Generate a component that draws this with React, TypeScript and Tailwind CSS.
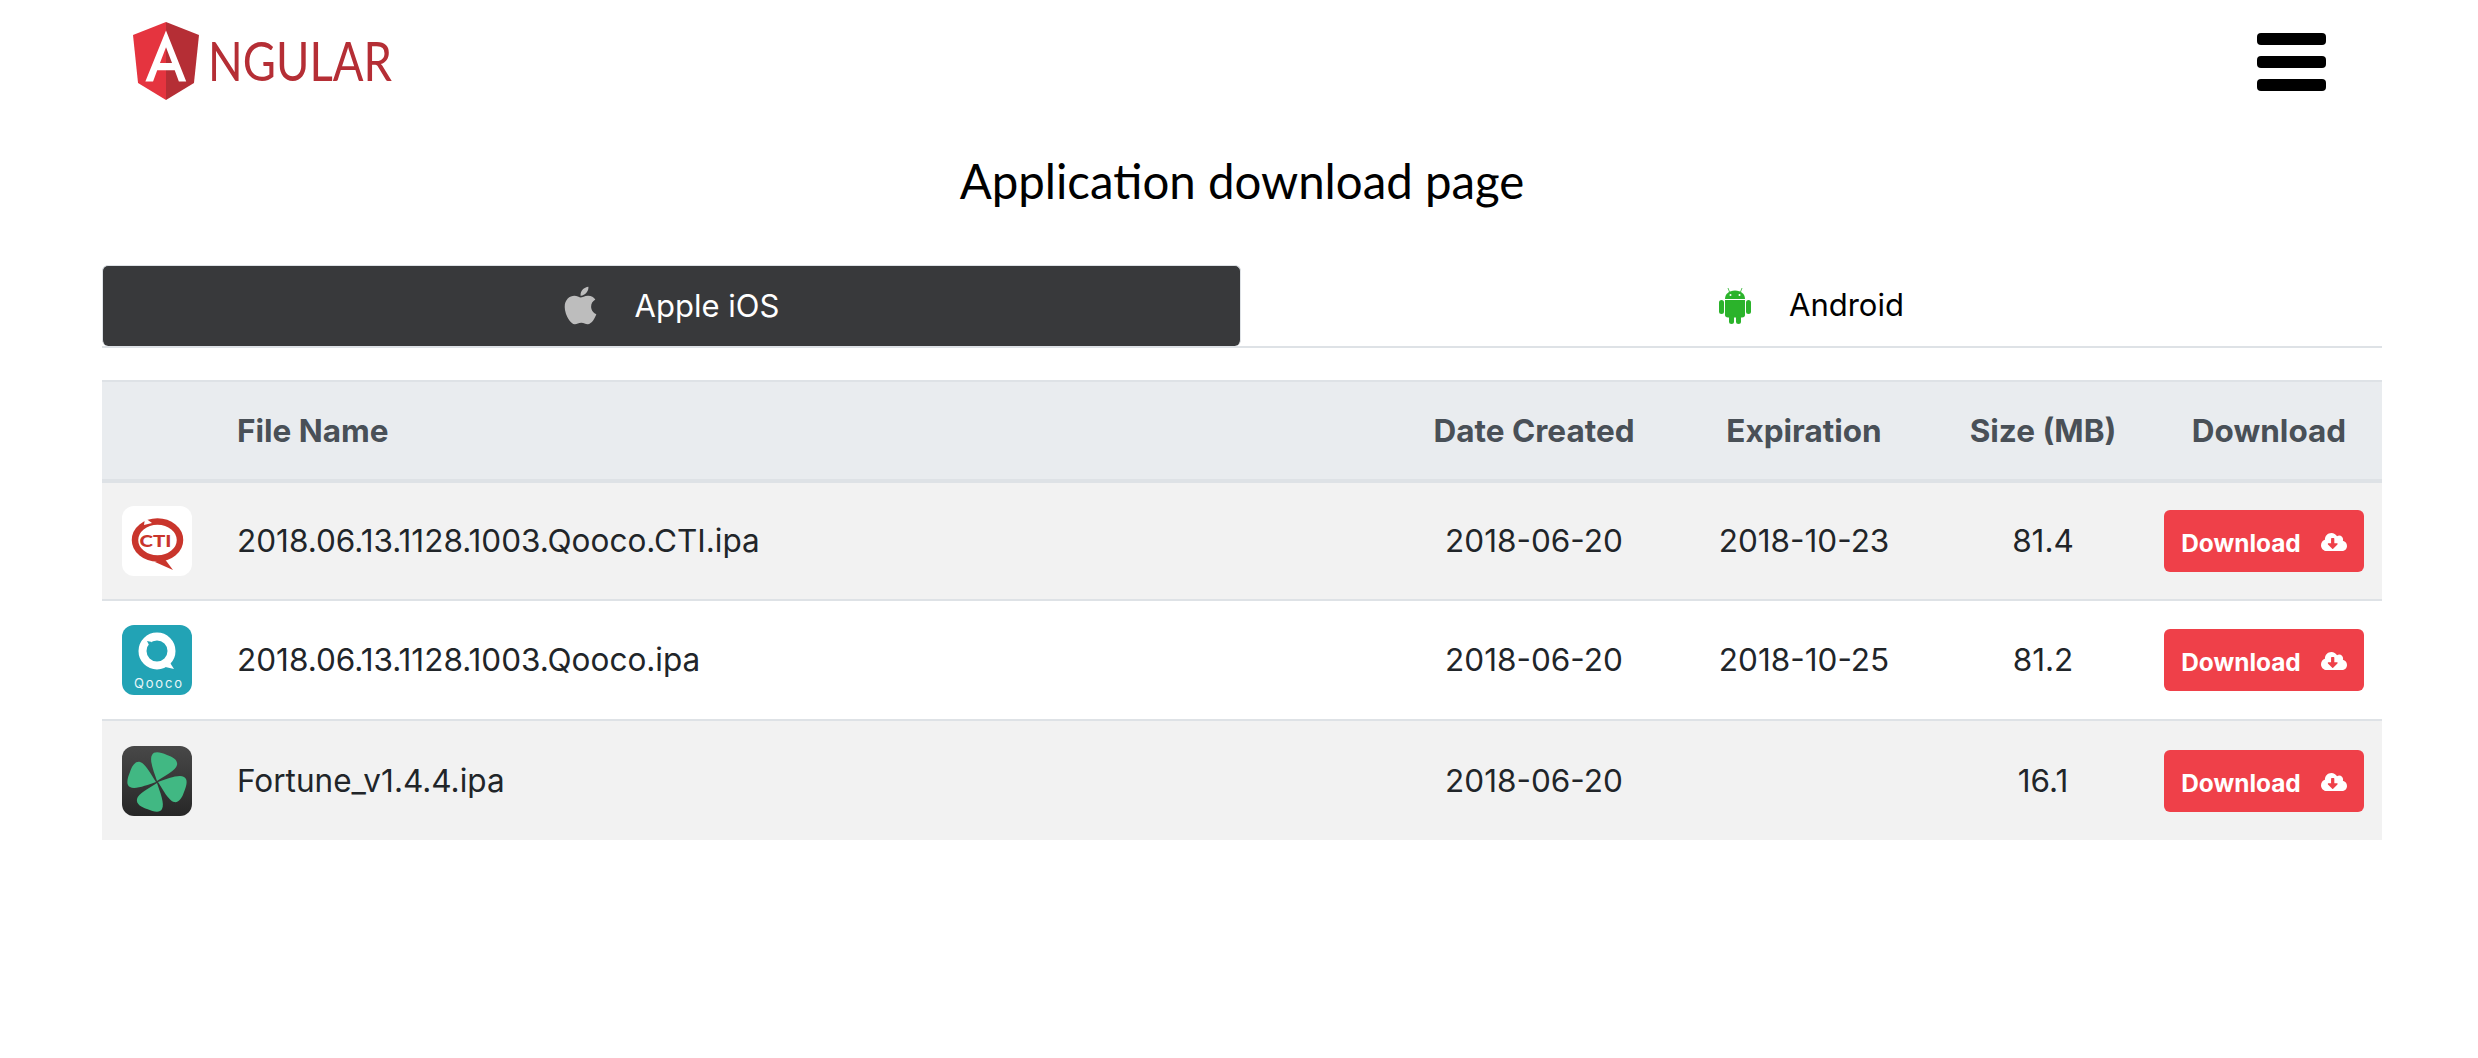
import { FaApple, FaCloudDownloadAlt } from "react-icons/fa";

const sans = "font-['Inter','Liberation_Sans',sans-serif]";

function Logo() {
  return (
    <svg width="270" height="78" viewBox="0 0 270 78" className="block overflow-visible">
      <g transform="translate(0 0) scale(0.3545 0.39) translate(-31.9 -30)">
        <polygon points="125,30 31.9,63.2 46.1,186.3 125,230" fill="#e5343f" />
        <polygon points="125,30 218.1,63.2 203.9,186.3 125,230" fill="#b52e35" />
        <path
          fill="#fff"
          fillRule="evenodd"
          d="M125,52.1L66.8,182.6h21.7l11.7-29.2h49.4l11.7,29.2H182L125,52.1z M142,135.4H108l17-40.9L142,135.4z"
        />
      </g>
      <text
        x="75"
        y="59"
        fontFamily="Lato, sans-serif"
        fontSize="54"
        fill="#b52e35"
        textLength="184"
        lengthAdjust="spacingAndGlyphs"
      >
        NGULAR
      </text>
    </svg>
  );
}

function AndroidIcon() {
  return (
    <svg width="32" height="37" viewBox="0 0 32 37" className="block">
      <g fill="#2bb32b">
        <rect x="0" y="13" width="5" height="14" rx="2.5" />
        <rect x="27" y="13" width="5" height="14" rx="2.5" />
        <path d="M6 12 C6 7 10 3.500 16 3.500 C22 3.500 26 7 26 12 Z" />
        <path d="M6 13 H26 V28 C26 29.500 25 30.500 23 30.500 H9 C7 30.500 6 29.500 6 28 Z" />
        <rect x="10" y="28" width="5" height="9" rx="2.500" />
        <rect x="17" y="28" width="5" height="9" rx="2.500" />
      </g>
      <path d="M10.500 5 L9 1 M21.500 5 L23 1" stroke="#2bb32b" strokeWidth="0.8" />
      <circle cx="11.500" cy="8" r="1" fill="#fff" />
      <circle cx="20.500" cy="8" r="1" fill="#fff" />
    </svg>
  );
}

function CtiIcon() {
  return (
    <svg width="70" height="70" viewBox="0 0 70 70" className="block">
      <rect width="70" height="70" rx="12" fill="#fff" />
      <path d="M42 52 L51 64 L33 56 Z" fill="#c9352c" />
      <ellipse cx="35.500" cy="34" rx="22.500" ry="18.500" fill="none" stroke="#c9352c" strokeWidth="6.500" />
      <path d="M22 19 L23 12 L30 17 Z" fill="#fff" />
      <text
        x="33.500"
        y="41"
        textAnchor="middle"
        fontFamily="Lato, sans-serif"
        fontWeight="900"
        fontSize="16"
        textLength="32"
        lengthAdjust="spacingAndGlyphs"
        fill="#c9352c"
      >
        CTI
      </text>
    </svg>
  );
}

function QoocoIcon() {
  return (
    <svg width="70" height="70" viewBox="0 0 70 70" className="block">
      <rect width="70" height="70" rx="12" fill="#22a3b5" />
      <circle cx="35" cy="26" r="14.500" fill="none" stroke="#fff" strokeWidth="8" />
      <path d="M45 33 L52 44 L39 41 Z" fill="#fff" />
      <path d="M25 16 L27 20 L30 17 Z" fill="#22a3b5" />
      <text
        x="36"
        y="63"
        textAnchor="middle"
        fontFamily="Inter, sans-serif"
        fontSize="13"
        textLength="48"
        fill="#e8f6f8"
      >
        Qooco
      </text>
    </svg>
  );
}

function FortuneIcon() {
  const petal = "M0 -1 C-3 -10 -8 -22 -5 -27 C-3 -31 3 -30 10 -27 C16 -25 21 -22 20 -17 C19 -12 8 -6 0 -1 Z";
  return (
    <svg width="70" height="70" viewBox="0 0 70 70" className="block">
      <defs>
        <linearGradient id="fortune" x1="0" y1="0" x2="0" y2="1">
          <stop offset="0" stopColor="#484848" />
          <stop offset="1" stopColor="#272727" />
        </linearGradient>
      </defs>
      <rect width="70" height="70" rx="12" fill="url(#fortune)" />
      <g transform="translate(35 36)" fill="#41b883">
        <path d={petal} />
        <path d={petal} transform="rotate(90)" />
        <path d={petal} transform="rotate(180)" />
        <path d={petal} transform="rotate(270)" />
      </g>
    </svg>
  );
}

const rows = [
  { icon: <CtiIcon />, name: "2018.06.13.1128.1003.Qooco.CTI.ipa", created: "2018-06-20", exp: "2018-10-23", size: "81.4", tr: "h-[119px] bg-[#f2f2f2]" },
  { icon: <QoocoIcon />, name: "2018.06.13.1128.1003.Qooco.ipa", created: "2018-06-20", exp: "2018-10-25", size: "81.2", tr: "h-[120px] bg-white border-t-2 border-[#dee2e6]" },
  { icon: <FortuneIcon />, name: "Fortune_v1.4.4.ipa", created: "2018-06-20", exp: "", size: "16.1", tr: "h-[120px] bg-[#f2f2f2] border-t-2 border-[#dee2e6]" },
];

export default function App() {
  return (
    <div className={`${sans} min-h-[1058px] bg-white pl-[102px] pr-[96px] text-[#212529]`}>
      <header className="flex items-start justify-between pt-[22px] pl-[31px] pr-[56px]">
        <Logo />
        <div className="mt-[11px] flex w-[69px] flex-col gap-[11px]">
          <div className="h-[12px] rounded-[4px] bg-black" />
          <div className="h-[12px] rounded-[4px] bg-black" />
          <div className="h-[12px] rounded-[4px] bg-black" />
        </div>
      </header>

      <h1 className="mt-[53px] text-center font-['Lato',sans-serif] text-[47.400px] leading-[56px] font-normal text-black">
        Application download page
      </h1>

      <nav className="mt-[56px] flex border-b-2 border-[#dee2e6]">
        <div className="flex h-[81px] w-[1139px] items-center justify-center gap-[33px] rounded-[6px] border border-b-0 border-[#dee2e6] bg-[#38393b] pr-[5px] text-[31px] text-white">
          <FaApple className="mb-[2px] text-[43px] text-[#bdbdbd]" />
          <span>Apple iOS</span>
        </div>
        <div className="flex h-[81px] flex-1 items-center justify-center gap-[38px] text-[31px] text-black">
          <AndroidIcon />
          <span>Android</span>
        </div>
      </nav>

      <table className="mt-[32px] w-full table-fixed border-collapse text-[31.500px]">
        <colgroup>
          <col className="w-[115px]" />
          <col />
          <col className="w-[268px]" />
          <col className="w-[272px]" />
          <col className="w-[206px]" />
          <col className="w-[236px]" />
        </colgroup>
        <thead>
          <tr className="h-[100px] border-t-2 border-b-4 border-[#dee2e6] bg-[#e9ecef] font-bold text-[#495057]">
            <th />
            <th className="pl-[20px] text-left font-bold">File Name</th>
            <th className="font-bold">Date Created</th>
            <th className="font-bold">Expiration</th>
            <th className="font-bold">Size (MB)</th>
            <th className="pl-[10px] font-bold">Download</th>
          </tr>
        </thead>
        <tbody>
          {rows.map((r) => (
            <tr key={r.name} className={r.tr}>
              <td className="pl-[20px]">{r.icon}</td>
              <td className="pl-[20px]">{r.name}</td>
              <td className="text-center">{r.created}</td>
              <td className="text-center">{r.exp}</td>
              <td className="text-center">{r.size}</td>
              <td className="text-center">
                <button className="mx-auto flex h-[62px] w-[200px] items-center justify-center gap-[20px] rounded-[6px] bg-[#ef4049] text-[24.400px] font-bold text-white">
                  <span className="pt-[5px]">Download</span>
                  <FaCloudDownloadAlt className="mt-[2px] text-[26px]" />
                </button>
              </td>
            </tr>
          ))}
        </tbody>
      </table>
    </div>
  );
}
